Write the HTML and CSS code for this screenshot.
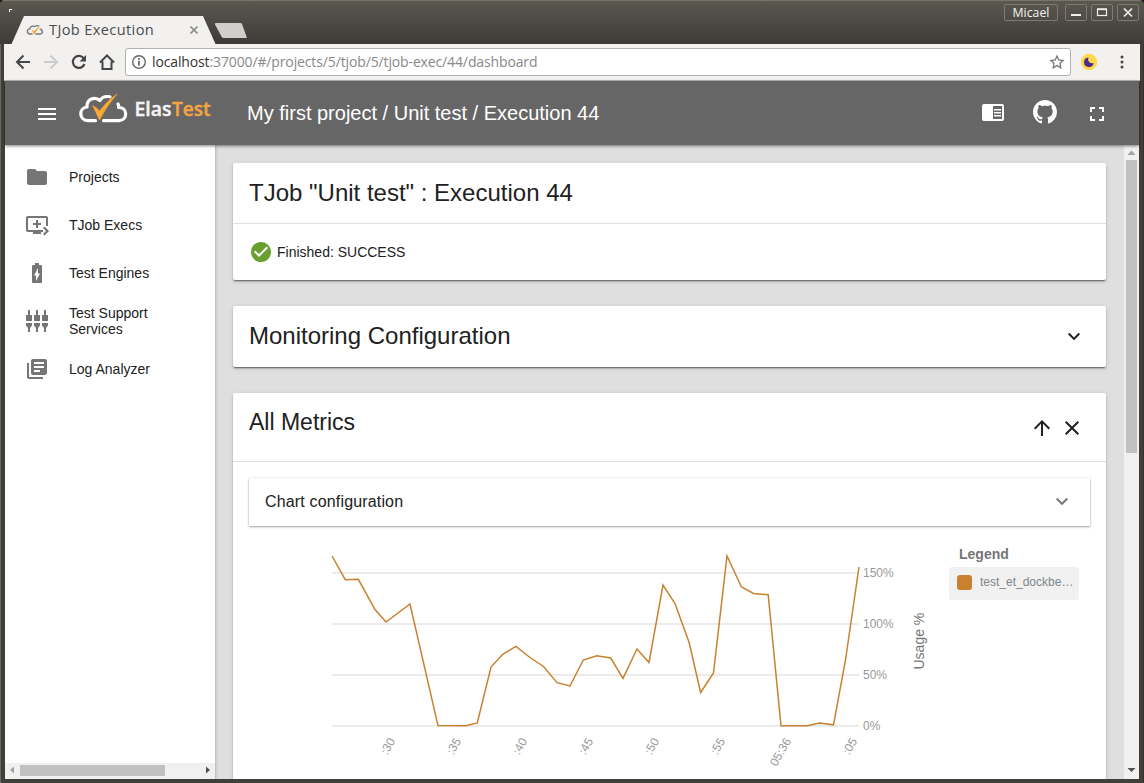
FILE: index.html
```html
<!DOCTYPE html>
<html lang="en">
<head>
<meta charset="utf-8">
<title>TJob Execution</title>
<link rel="stylesheet" href="styles.css">
</head>
<body>
<div class="window">
  <div class="titlebar">
    <svg class="tabs" width="260" height="44" viewBox="0 0 260 44">
      <path d="M9.500 12V9.500H12" fill="none" stroke="#fff"/>
      <path d="M11.500 44L24 16H203l12.500 28z" fill="#f2f1f0"/>
      <path d="M216 23h24q1.500 0 2 1l5 14h-23q-2 0-2.500-1.500L215 24.500q-.5-1.500 1-1.500z" fill="#cfcecc"/>
      <g transform="translate(27 25.500) scale(.34)" fill="none">
        <path d="M16 25H9C-2 24-1 11 8 10C9 3 17 0 22 3C26 0 32 0 36 1M37 10C46 10 49 24 39 25H25" stroke="#777" stroke-width="4"/>
        <path d="M13 11l7 6L39-1L21 27z" fill="#f5a33c"/>
      </g>
      <path d="M190.500 26.500l7 7m0-7l-7 7" stroke="#888" stroke-width="1.700"/>
    </svg>
    <span class="tab-title">TJob Execution</span>
    <div class="controls">
      <span class="user">Micael</span>
      <span class="control"><svg width="20" height="15"><path d="M5 10h10" stroke="#f0efe9" stroke-width="2"/></svg></span>
      <span class="control"><svg width="20" height="15"><rect x="5.500" y="4.500" width="9" height="6" fill="none" stroke="#f0efe9" stroke-width="1.200"/><path d="M5 4h10" stroke="#f0efe9" stroke-width="1.600"/></svg></span>
      <span class="control"><svg width="20" height="15"><path d="M6 3.500l8 8m0-8l-8 8" stroke="#f0efe9" stroke-width="1.700"/></svg></span>
    </div>
  </div>

  <div class="toolbar">
    <svg class="nav" width="120" height="36" viewBox="4 44 120 36" fill="none" stroke="#454545" stroke-width="2">
      <path d="M30 62H17m6.500-6.500L17 62l6.500 6.500"/>
      <path d="M44 62h13m-6.500-6.500L57 62l-6.500 6.500" stroke="#ccc"/>
      <path d="M83.800 58.500A6 6 0 1 0 84.500 64" stroke-width="2.200"/><path d="M86 55v6.500h-6.500z" fill="#454545" stroke="none"/>
      <path d="M100 62.500L107 55.500l7 7M102.500 61.500v7.500h9v-7.500"/>
    </svg>
    <div class="address">
      <svg width="16" height="16" fill="none" stroke="#666" stroke-width="1.400"><circle cx="8" cy="8" r="6.300"/><path d="M8 7v4.500M8 4v1.700" stroke-width="1.800"/></svg>
      <span class="url"><b>localhost</b>:37000/#/projects/5/tjob/5/tjob-exec/44/dashboard</span>
      <svg width="16" height="16"><path d="M8 2l1.800 4 4.400.5-3.200 3 .8 4.300L8 11.600l-3.800 2.200.8-4.300-3.200-3L6.200 6z" fill="none" stroke="#777" stroke-width="1.300"/></svg>
    </div>
    <svg class="extension" width="18" height="18"><circle cx="9" cy="9" r="8.200" fill="#ffd84c"/><path d="M8.500 4.500A4.800 4.800 0 1 0 13.600 10A4 4 0 0 1 8.500 4.500z" fill="#4a2a8c"/></svg>
    <svg class="dots" width="6" height="16" fill="#454545"><circle cx="3" cy="3" r="1.500"/><circle cx="3" cy="8" r="1.500"/><circle cx="3" cy="13" r="1.500"/></svg>
  </div>

  <header class="app-header">
    <svg class="menu" width="18" height="12"><path d="M0 1h18M0 6h18M0 11h18" stroke="#fff" stroke-width="2"/></svg>
    <svg class="logo" width="136" height="34" viewBox="76 92 136 34">
      <path d="M95.500 120.700H88C78.500 120 78.500 108 87 107C86.500 99 95 96 100 100.500C102 97 106 96 110 96.800M118 104Q119 105.500 118.500 107.500C127.500 107 128.500 120 119 120.700H103.500" fill="none" stroke="#fff" stroke-width="3.200" stroke-linecap="round" stroke-linejoin="round"/>
      <path d="M92.500 105.500Q96 107 99.500 111Q107 101 117 94Q106 107 99.500 120Q96 112 92.500 105.500z" fill="#ffa733" stroke="#ffa733" stroke-width=".6"/>
      <text x="134.500" y="116" class="wordmark" textLength="37" lengthAdjust="spacingAndGlyphs">Elas</text>
      <text x="172" y="116" class="wordmark accent" textLength="38.500" lengthAdjust="spacingAndGlyphs">Test</text>
    </svg>
    <h1>My first project / Unit test / Execution 44</h1>
    <div class="actions">
      <svg width="24" height="24" viewBox="0 0 24 24"><path d="M3 4h18a2 2 0 0 1 2 2v13a2 2 0 0 1-2 2H3a2 2 0 0 1-2-2V6a2 2 0 0 1 2-2z" fill="#fff"/><path d="M12 6h9v13h-9z" fill="#666"/><path d="M13 9.700h7M13 12.700h7M13 15.700h7" stroke="#fff" stroke-width="1.400"/></svg>
      <svg width="24" height="24" viewBox="0 0 16 16"><path fill="#fff" d="M8 0C3.580 0 0 3.580 0 8c0 3.540 2.290 6.530 5.470 7.590.4.070.55-.17.55-.38 0-.19-.01-.82-.01-1.490-2.010.37-2.530-.49-2.690-.94-.09-.23-.48-.94-.82-1.130-.28-.15-.68-.52-.01-.53.63-.01 1.080.58 1.230.82.72 1.210 1.870.87 2.330.66.070-.52.28-.87.51-1.070-1.780-.2-3.640-.89-3.640-3.950 0-.87.31-1.590.82-2.150-.08-.2-.36-1.020.08-2.120 0 0 .67-.21 2.200.82.64-.18 1.320-.27 2-.27s1.360.09 2 .27c1.530-1.040 2.200-.82 2.200-.82.44 1.100.16 1.920.08 2.120.51.56.82 1.270.82 2.150 0 3.070-1.870 3.750-3.650 3.950.29.25.54.73.54 1.480 0 1.070-.01 1.930-.01 2.200 0 .21.15.46.55.38A8.010 8.010 0 0 0 16 8c0-4.420-3.580-8-8-8z"/></svg>
      <svg width="24" height="24" viewBox="0 0 24 24"><path transform="translate(0 2)" d="M7 14H5v5h5v-2H7v-3zm-2-4h2V7h3V5H5v5zm12 7h-3v2h5v-5h-2v3zM14 5v2h3v3h2V5h-5z" fill="#fff"/></svg>
    </div>
  </header>

  <div class="body">
    <nav class="sidebar">
      <a class="item"><svg viewBox="0 0 24 24"><path d="M10 4H4c-1.100 0-2 .9-2 2v12c0 1.100.9 2 2 2h16c1.100 0 2-.9 2-2V8c0-1.100-.9-2-2-2h-8z"/></svg><span>Projects</span></a>
      <a class="item"><svg viewBox="0 0 24 24"><path d="M21 3H3c-1.110 0-2 .89-2 2v12c0 1.100.89 2 2 2h5v2h8v-2h2v-2H3V5h18v8h2V5c0-1.110-.9-2-2-2zm-8 7V7h-2v3H8v2h3v3h2v-3h3v-2h-3zm11 8l-4.500 4.500L18 21l3-3-3-3 1.500-1.500L24 18z"/></svg><span>TJob Execs</span></a>
      <a class="item"><svg viewBox="0 0 24 24"><path d="M15.670 4H14V2h-4v2H8.330C7.600 4 7 4.600 7 5.330v15.330C7 21.400 7.600 22 8.330 22h7.330c.74 0 1.340-.6 1.340-1.330V5.330C17 4.600 16.400 4 15.670 4zM11 20v-5.500H9L13 7v5.500h2L11 20z"/></svg><span>Test Engines</span></a>
      <a class="item"><svg viewBox="0 0 24 24"><path d="M3 1h2v5h2v6H1V6h2zM11 1h2v5h2v6H9V6h2zM19 1h2v5h2v6h-6V6h2zM1 14h6v2.500L5 19v4H3v-4l-2-2.500zM9 14h6v2.500L13 19v4h-2v-4l-2-2.500zM17 14h6v2.500L21 19v4h-2v-4l-2-2.500z"/></svg><span>Test Support<br>Services</span></a>
      <a class="item"><svg viewBox="0 0 24 24"><path d="M4 6H2v14c0 1.100.9 2 2 2h14v-2H4V6zm16-4H8c-1.100 0-2 .9-2 2v12c0 1.100.9 2 2 2h12c1.100 0 2-.9 2-2V4c0-1.100-.9-2-2-2zm-1 9H9V9h10v2zm-4 4H9v-2h6v2zm4-8H9V5h10v2z"/></svg><span>Log Analyzer</span></a>
      <div class="hscroll">
        <svg width="15" height="16"><path d="M9 4.500v7L5 8z" fill="#a3a3a3"/></svg>
        <div class="hthumb"></div>
        <svg width="15" height="16"><path d="M6 4.500v7L10 8z" fill="#505050"/></svg>
      </div>
    </nav>

    <main class="content">
      <section class="card status">
        <h2>TJob "Unit test" : Execution 44</h2>
        <div class="result">
          <svg width="24" height="24" viewBox="0 0 24 24"><path fill="#689f2f" d="M12 2C6.480 2 2 6.480 2 12s4.480 10 10 10 10-4.480 10-10S17.520 2 12 2zm-2 15l-5-5 1.410-1.410L10 14.170l7.590-7.590L19 8l-9 9z"/></svg>
          <span>Finished: SUCCESS</span>
        </div>
      </section>

      <section class="card monitoring">
        <h2>Monitoring Configuration</h2>
        <svg width="24" height="24" viewBox="0 0 24 24"><path fill="#212121" d="M7.410 7.840L12 12.420l4.590-4.580L18 9.250l-6 6-6-6z"/></svg>
      </section>

      <section class="card metrics">
        <div class="metrics-head">
          <h2>All Metrics</h2>
          <div class="tools">
            <svg width="24" height="24" viewBox="0 0 24 24"><path fill="#212121" d="M4 12l1.410 1.410L11 7.830V20h2V7.830l5.580 5.590L20 12l-8-8-8 8z"/></svg>
            <svg width="24" height="24" viewBox="0 0 24 24"><path fill="#212121" d="M19 6.410L17.590 5 12 10.590 6.410 5 5 6.410 10.590 12 5 17.590 6.410 19 12 13.410 17.590 19 19 17.590 13.410 12z"/></svg>
          </div>
        </div>
        <div class="chart-config">
          <span>Chart configuration</span>
          <svg width="24" height="24" viewBox="0 0 24 24"><path fill="#757575" d="M7.410 7.840L12 12.420l4.590-4.580L18 9.250l-6 6-6-6z"/></svg>
        </div>
        <div class="chart-row">
          <svg class="chart" width="700" height="240" viewBox="249 539 700 240">
            <path d="M332 573h527M332 624h527M332 675h527M332 726h527" stroke="#ebebeb" stroke-width="2"/>
            <path d="M332 556l13.300 23.700 13-.4L375 609.500l11 12.500 24-18L438 725.600l28 .2 11.300-2.800L491 667l12-13 13-7.700 14 11.200 13.500 9 13.500 16.200 13 3.300 13.300-26 13.400-4.200 14 2.200 12.300 20.300 14-29.300 12 13.500L663 585l12 18.500L689.300 643l11.300 49.500L713.500 673 727 556l14.500 31 12 6.500 14.700 1.300L781 725.700h26.500l12-2.700 14 1.800L845.500 660 859 567" fill="none" stroke="#c9812f" stroke-width="1.500"/>
            <g class="axis">
              <text x="863" y="577">150%</text><text x="863" y="628">100%</text><text x="863" y="679">50%</text><text x="863" y="730">0%</text>
            </g>
            <g class="axis ticks" text-anchor="end">
              <text transform="translate(395.500 741) rotate(-60)">:30</text>
              <text transform="translate(461.500 741) rotate(-60)">:35</text>
              <text transform="translate(527.500 741) rotate(-60)">:40</text>
              <text transform="translate(593.500 741) rotate(-60)">:45</text>
              <text transform="translate(659.500 741) rotate(-60)">:50</text>
              <text transform="translate(725.500 741) rotate(-60)">:55</text>
              <text transform="translate(791.500 741) rotate(-60)">05:36</text>
              <text transform="translate(857.500 741) rotate(-60)">:05</text>
            </g>
            <text class="axis-label" transform="translate(924 669.500) rotate(-90)">Usage %</text>
          </svg>
          <aside class="legend">
            <h3>Legend</h3>
            <div class="series"><i class="swatch"></i><span>test_et_dockbe…</span></div>
          </aside>
        </div>
      </section>
    </main>

    <div class="vscroll">
      <svg width="15" height="15"><path d="M3.500 10h8L7.500 5.500z" fill="#a3a3a3"/></svg>
      <div class="vthumb"></div>
      <svg class="down" width="15" height="17"><path d="M3.500 6h8L7.500 10z" fill="#505050"/></svg>
    </div>
  </div>
</div>
</body>
</html>
```
FILE: styles.css
```css
* { box-sizing: border-box; }
body {
  margin: 0;
  overflow: hidden;
  background: #300a24;
  font-family: "Liberation Sans", Arial, sans-serif;
  color: #212121;
}
h1, h2, h3 { margin: 0; font-weight: 400; }
svg { display: block; flex: none; }

.window {
  width: 1144px;
  height: 783px;
  display: flex;
  flex-direction: column;
  background: #403f39;
  border-radius: 5px 5px 0 0;
  overflow: hidden;
  box-shadow: inset 1px 0 #6a6860, inset -1px 0 #33322d;
}

.titlebar {
  position: relative;
  height: 44px;
  flex: none;
  background: linear-gradient(#5b5850, #3c3b37);
  border-top: 1px solid #77756d;
  display: flex;
  justify-content: space-between;
}
.tabs { margin-top: -1px; }
.tab-title {
  position: absolute;
  left: 49px;
  top: 18px;
  font: 14.6px/20px "Open Sans", "Noto Sans", sans-serif;
  letter-spacing: .37px;
  color: #4c4c4c;
  white-space: nowrap;
}
.controls { display: flex; padding: 3px 5px 0 0; }
.controls > * {
  height: 17px;
  border: 1px solid #7c7a72;
  border-radius: 2px;
  color: #f4f3ee;
}
.user {
  width: 54px;
  margin-right: 7px;
  text-align: center;
  font: 12.3px/15px "Open Sans", sans-serif;
}
.control { width: 22px; margin-right: 4px; }
.control:last-child { margin-right: 0; }

.toolbar {
  height: 37px;
  flex: none;
  margin: 0 4px;
  background: #f2f1f0;
  border-bottom: 1px solid #bbb;
  display: flex;
  align-items: center;
}
.address {
  margin-left: 1px;
  width: 946px;
  height: 28px;
  border: 1px solid #b0b0ae;
  border-radius: 3px;
  background: #fff;
  display: flex;
  align-items: center;
  padding: 0 5px;
}
.url {
  flex: 1;
  margin-left: 5px;
  font: 14px/20px "Open Sans", "Noto Sans", sans-serif;
  color: #888;
  letter-spacing: -.13px;
  white-space: nowrap;
}
.url b { font-weight: 400; color: #333; }
.extension { margin-left: 9px; }
.dots { margin-left: 21px; }

.app-header {
  position: relative;
  height: 64px;
  flex: none;
  margin: 0 5px;
  padding-left: 33px;
  display: flex;
  align-items: center;
  background: #666;
  color: #fff;
  box-shadow: 0 1px 3px rgba(0, 0, 0, .5);
}
.menu { margin-top: 2px; }
.logo { margin: -8px 0 0 20px; }
.wordmark {
  font: 600 19.500px "Open Sans", sans-serif;
  fill: #f4f4f4;
  stroke: #f4f4f4;
  stroke-width: .4px;
}
.wordmark.accent { fill: #f5a442; stroke: #f5a442; }
.app-header h1 { margin-left: 35px; font-size: 20px; line-height: 24px; }
.actions { margin: 0 30px 2px auto; display: flex; gap: 28px; }

.body { flex: 1; min-height: 0; margin: 0 5px 4px; display: flex; }
.sidebar {
  width: 210px;
  flex: none;
  background: #fff;
  padding-top: 8px;
  display: flex;
  flex-direction: column;
}
.item {
  height: 48px;
  flex: none;
  padding-left: 20px;
  display: flex;
  align-items: center;
  gap: 20px;
  font-size: 14px;
  line-height: 16px;
}
.item svg { width: 24px; height: 24px; fill: #757575; }
.hscroll { height: 16px; margin-top: auto; background: #f0f0f0; display: flex; align-items: flex-start; }
.hscroll svg { margin-top: -1px; }
.hthumb { width: 145px; height: 11px; margin: 2px auto 0 0; background: #c1c1c1; }

.content {
  flex: 1;
  min-width: 0;
  padding: 18px;
  background: #dfdfdf;
  box-shadow: inset 3px 0 3px -2px rgba(0, 0, 0, .2);
  display: flex;
  flex-direction: column;
  gap: 26px;
  overflow: hidden;
}
.card {
  flex: none;
  background: #fff;
  border-radius: 2px;
  box-shadow: 0 3px 1px -2px rgba(0, 0, 0, .2), 0 2px 2px rgba(0, 0, 0, .14), 0 1px 5px rgba(0, 0, 0, .12), 0 1px 1px rgba(0, 0, 0, .2);
}
h2 { font-size: 24px; line-height: 28px; }
.status { height: 117px; }
.status h2 { height: 61px; padding: 16px; border-bottom: 1px solid #dfdfdf; }
.result { height: 56px; padding-left: 16px; display: flex; align-items: center; gap: 4px; font-size: 14px; }
.monitoring {
  height: 61px;
  padding: 0 20px 0 16px;
  display: flex;
  align-items: center;
  justify-content: space-between;
}
.monitoring h2 { padding-bottom: 2px; }
.metrics { height: 520px; }
.metrics-head {
  height: 69px;
  padding: 15px 22px 0 16px;
  border-bottom: 1px solid #dfdfdf;
  display: flex;
  justify-content: space-between;
}
.metrics-head h2 { font-size: 23px; }
.tools { display: flex; gap: 6px; padding-top: 8px; }
.chart-config {
  height: 48px;
  margin: 16px 16px 0;
  padding: 0 16px;
  display: flex;
  align-items: center;
  justify-content: space-between;
  font-size: 16px;
  letter-spacing: .16px;
  box-shadow: 0 1px 2px rgba(0, 0, 0, .35), 0 0 2px rgba(0, 0, 0, .1);
}
.chart-row { margin: 13px 16px 0; display: flex; }
.axis text { font-size: 12px; fill: #999; }
.axis-label { font-size: 14px; fill: #777; }
.legend { width: 130px; padding-top: 7px; }
.legend h3 { padding-left: 10px; font: bold 14px/16px "Liberation Sans", Arial, sans-serif; color: #757575; }
.series {
  height: 33px;
  margin-top: 5px;
  padding: 0 0 3px 8px;
  display: flex;
  align-items: center;
  gap: 8px;
  border-radius: 3px;
  background: #f1f1f1;
  color: #7d868c;
  font-size: 12px;
  white-space: nowrap;
}
.swatch { width: 15px; height: 15px; border-radius: 3px; background: #c9812f; }

.vscroll { width: 15px; flex: none; background: #f0f0f0; display: flex; flex-direction: column; }
.vthumb { width: 11px; height: 293px; margin-left: 2px; background: #c1c1c1; }
.down { margin-top: auto; }
```
